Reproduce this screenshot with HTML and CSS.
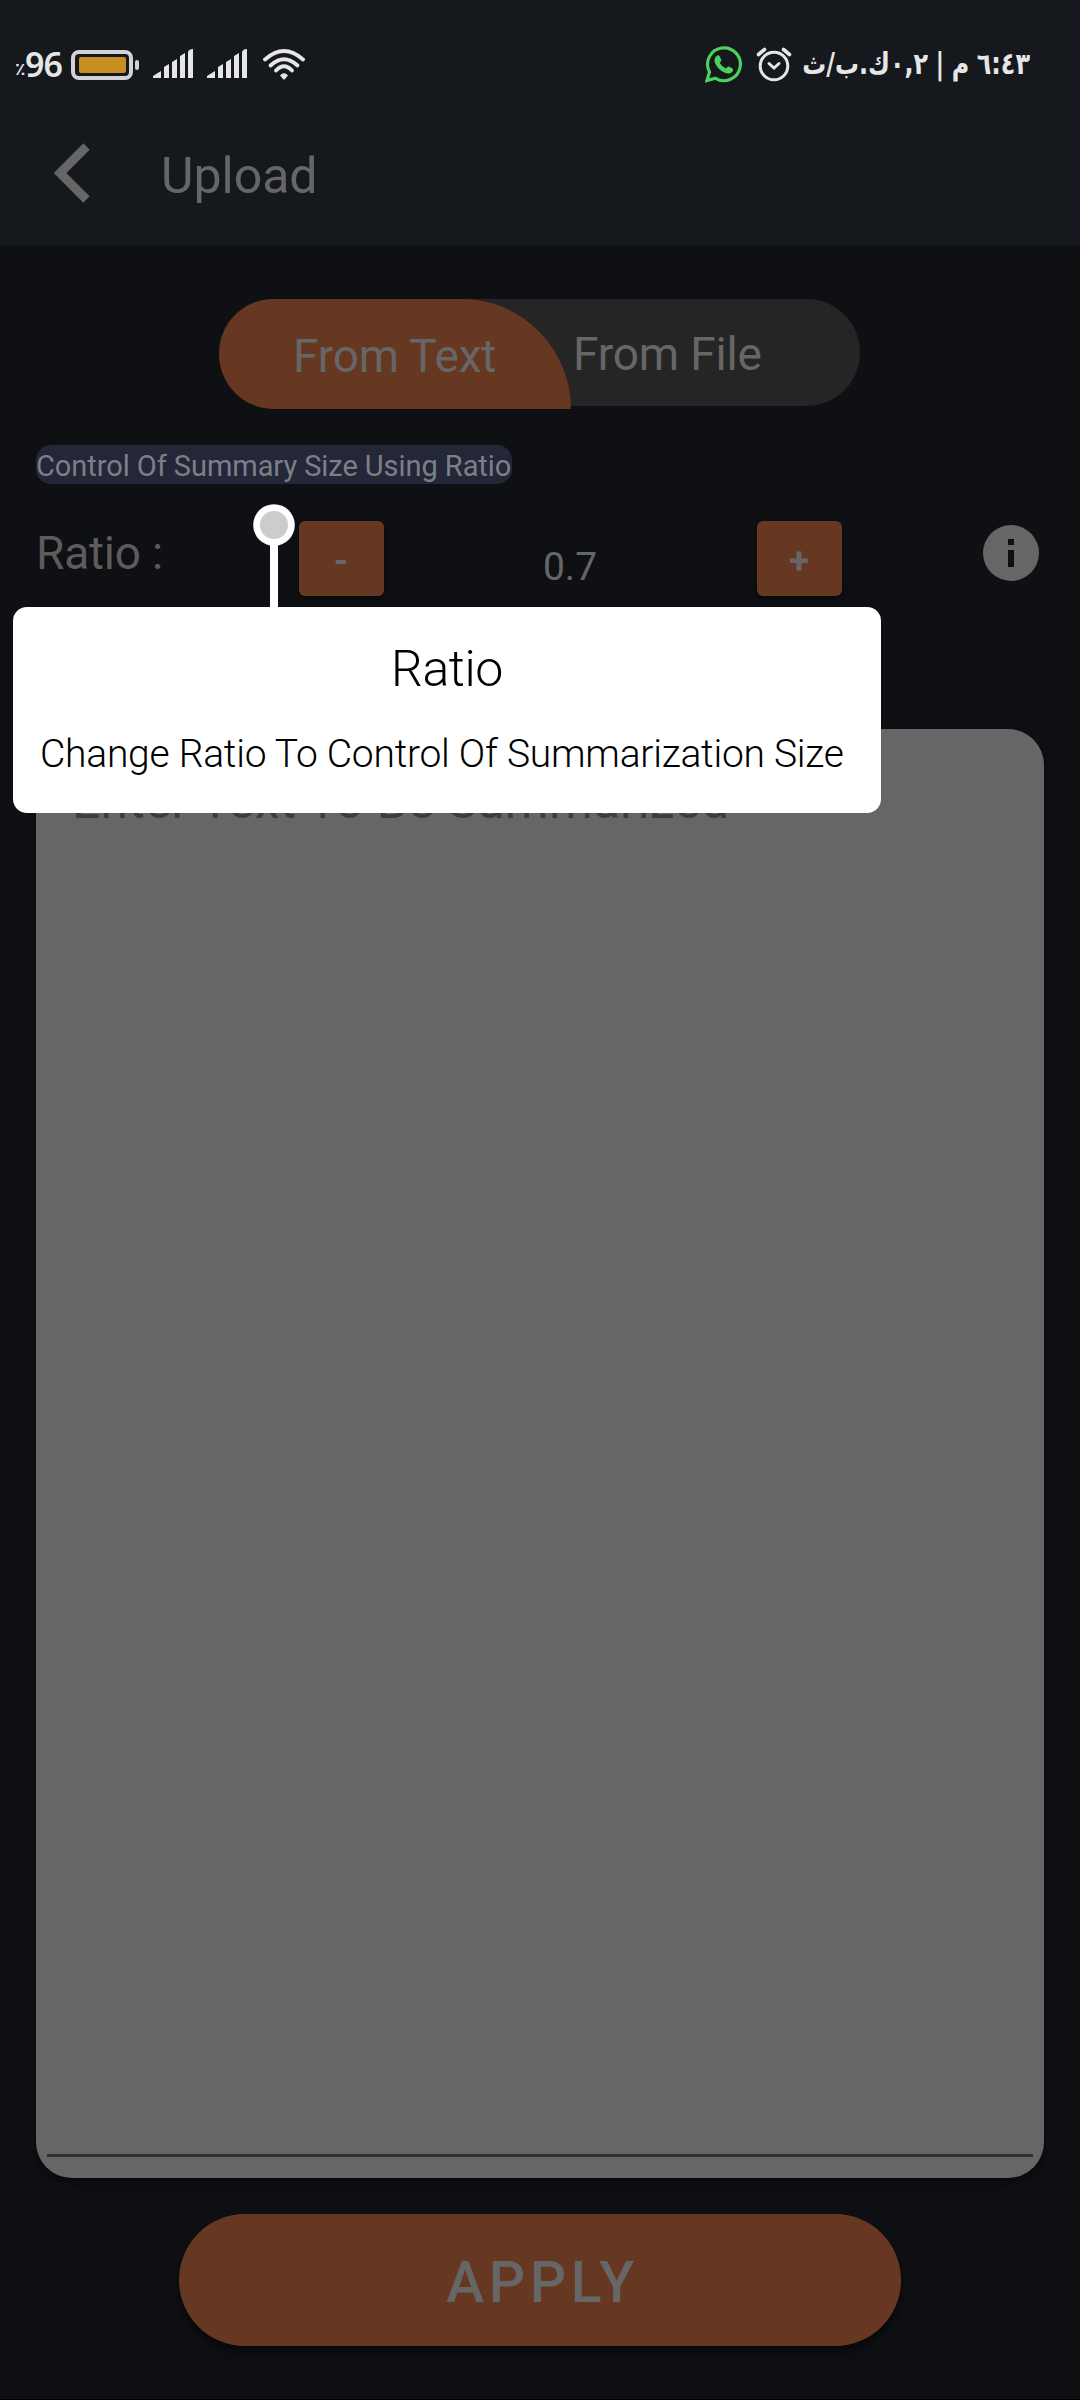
FILE: index.html
```html
<!DOCTYPE html>
<html lang="en">
<head>
<meta charset="utf-8">
<title>Upload</title>
<link rel="stylesheet" href="styles.css">
</head>
<body>
<div class="screen">
  <header class="top">
    <div class="status">
      <div class="status-left">
        <span class="pct">٪</span><span class="level">96</span>
        <svg class="battery" width="70" height="32" viewBox="0 0 70 32"><rect x="2" y="2" width="58" height="26" rx="6" fill="none" stroke="#d2d3d4" stroke-width="4"/><rect x="8" y="7" width="47" height="16" rx="2" fill="#c98e22"/><rect x="64" y="10" width="4" height="10" rx="2" fill="#d2d3d4"/></svg>
        <svg class="signal" width="40" height="30" viewBox="0 0 40 30"><path d="M0 29v-2l8-5v7zM11 29V18l5-3v14zM19 29V13l5-3v19zM27 29V7l5-3v25zM35 29V3q1-3 5-3v29z" fill="#e6e6e6"/></svg>
        <svg class="signal second" width="40" height="30" viewBox="0 0 40 30"><path d="M0 29v-2l8-5v7zM11 29V18l5-3v14zM19 29V13l5-3v19zM27 29V7l5-3v25zM35 29V3q1-3 5-3v29z" fill="#e6e6e6"/></svg>
        <svg class="wifi" width="42" height="31" viewBox="0 0 42 31"><g fill="none" stroke="#e6e6e6" stroke-width="3.8" stroke-linecap="round"><path d="M2 10.500Q21-6.500 40 10.500"/><path d="M7.500 16.500Q21 4 34.500 16.500"/><path d="M13 21.500Q21 13 29 21.500"/></g><path d="M17 26.500Q21 22 25 26.500L22 30Q21 31 20 30z" fill="#e6e6e6"/></svg>
      </div>
      <div class="status-right">
        <svg class="whatsapp" width="37" height="37" viewBox="0 0 37 37"><path d="M2 34.500 4.500 26A16.400 16.400 0 1 1 10.500 32.300z" fill="none" stroke="#47d35e" stroke-width="3.200"/><path d="M11.500 10c1-1 2.500-1 3 0l1.700 3.600c.5 1-.2 2-1.400 3.200 1.700 3 3.500 4.600 6.300 5.800 1-1.300 1.900-2.400 2.900-2l3.600 1.800c.9.600.3 2.600-.5 3.500-2 2-4.600 2-7.200.9C15 24.500 12 21.500 10.200 17.500c-1.200-2.800-.8-5.500 1.300-7.500z" fill="#47d35e"/></svg>
        <svg class="alarm" width="36" height="36" viewBox="0 0 36 36"><g fill="none" stroke="#e6e6e6" stroke-linecap="round"><circle cx="18" cy="20" r="13.800" stroke-width="3"/><path d="M13 17.500l5 4.500 5-4.500" stroke-width="3"/><path d="M2.500 8.500 8.500 3.500M33.500 8.500 27.500 3.500" stroke-width="3.600"/></g></svg>
        <span class="clock" dir="rtl" lang="ar">٦:٤٣ م | ٠,٢ك.ب/ث</span>
      </div>
    </div>
    <div class="toolbar">
      <svg class="back" width="36" height="60" viewBox="0 0 36 60"><path d="M32.500 3.500 6 30 32.500 56.500" fill="none" stroke="#666" stroke-width="9"/></svg>
      <h1 class="title">Upload</h1>
    </div>
  </header>

  <main class="content">
    <div class="tabs">
      <div class="tab active">From Text</div>
      <div class="tab">From File</div>
    </div>
    <div class="chip">Control Of Summary Size Using Ratio</div>
    <div class="ratio-row">
      <span class="ratio-label">Ratio :</span>
      <button class="step">-</button>
      <span class="ratio-value">0.7</span>
      <button class="step">+</button>
      <svg class="info" width="56" height="56" viewBox="0 0 56 56"><circle cx="28" cy="28" r="28" fill="#666"/><path d="M25 14h6v6h-6zM25 25h6v17h-6z" fill="#0e1014"/></svg>
    </div>
    <div class="editor"><span class="placeholder">Enter Text To Be Summarized</span><div class="underline"></div></div>
    <button class="apply">APPLY</button>
  </main>

  <div class="tooltip">
    <svg class="pin" width="42" height="104" viewBox="0 0 42 104"><path d="M17 30h8v74h-8z" fill="#fff"/><circle cx="21" cy="21" r="20.800" fill="#fff"/><circle cx="21" cy="21" r="14" fill="#ccc"/></svg>
    <div class="bubble">
      <h2 class="bubble-title">Ratio</h2>
      <p class="bubble-text">Change Ratio To Control Of Summarization Size</p>
    </div>
  </div>
</div>
</body>
</html>
```
FILE: styles.css
```css
* { box-sizing: border-box; }
body { margin: 0; background: #0e1014; font-family: Roboto, sans-serif; color: #666; }
button { border: 0; padding: 0; font-family: inherit; color: inherit; }
svg { display: block; flex: none; }
.screen { position: relative; width: 1080px; height: 2400px; overflow: hidden; border-bottom: 1px solid #000; white-space: nowrap; }

.top { height: 245px; background: #15181c; }
.status { display: flex; justify-content: space-between; height: 128px; padding: 0 50px 0 15px; }
.status-left, .status-right { display: flex; align-items: center; height: 128px; color: #e6e6e6; }
.pct { width: 10px; font: 700 17px/20px "DejaVu Sans", sans-serif; margin-top: 10px; }
.level { width: 46px; font: 600 34px/40px "Noto Sans", sans-serif; letter-spacing: -1px; }
.battery { margin-top: 4px; }
.signal { margin: 0 0 1px 12px; }
.signal.second { margin-left: 14px; }
.wifi { margin-left: 16px; }
.alarm { margin-left: 14px; }
.clock { width: 230px; margin: 0 0 0 8px; font: 700 30px/40px "DejaVu Sans", sans-serif; font-stretch: condensed; letter-spacing: -1px; word-spacing: -1px; transform: scaleX(0.885); transform-origin: right center; }

.toolbar { display: flex; align-items: flex-start; height: 117px; padding: 15px 0 0 54px; }
.title { margin: 3px 0 0 71px; font-weight: 400; font-size: 50px; line-height: 60px; }

.content { display: flex; flex-direction: column; align-items: flex-start; padding: 54px 36px 0; }
.tabs { display: flex; width: 641px; height: 107px; margin-left: 183px; background: #252525; border-radius: 55px; }
.tab { height: 107px; padding-left: 2px; font-size: 46px; line-height: 111px; letter-spacing: -0.15px; }
.tab.active { width: 352px; height: 110px; padding-left: 74px; line-height: 115px; background: #663821; border-radius: 55px 110px 0 55px; }
.chip { width: 476px; height: 39px; margin-top: 39px; border-radius: 15px; background: #242737; color: #7d7f88; font-size: 29px; line-height: 43px; letter-spacing: -0.06px; }
.ratio-row { display: flex; align-items: flex-start; width: 1008px; height: 208px; margin-top: 37px; }
.ratio-label { width: 263px; padding-top: 4px; color: #5c5c5c; font-size: 46px; line-height: 56px; letter-spacing: -0.2px; }
.step { width: 85px; height: 75px; padding: 4px 1px 0 0; border-radius: 6px; background: #663821; box-shadow: 0 3px 6px #0008; font-weight: 700; font-size: 37px; line-height: 71px; }
.ratio-value { width: 373px; padding: 21px 1px 0 0; text-align: center; font-size: 39px; line-height: 50px; }
.info { margin: 4px 0 0 141px; }
.editor { display: flex; flex-direction: column; justify-content: space-between; width: 1008px; height: 1449px; padding: 42px 11px 21px; border-radius: 36px; background: #666; box-shadow: 0 4px 12px #0008; }
.placeholder { padding-left: 25px; color: #3d3d3d; font-size: 50px; line-height: 60px; letter-spacing: 0.18px; }
.underline { height: 3px; background: #303030; }
.apply { align-self: center; width: 722px; height: 132px; margin-top: 36px; padding: 4px 0 0 5px; border-radius: 66px; background: #663821; box-shadow: 0 6px 12px #0008; font-weight: 500; font-size: 57px; letter-spacing: 4.7px; }

.tooltip { position: absolute; left: 13px; top: 504px; width: 868px; }
.pin { margin-left: 240px; }
.bubble { height: 206px; margin-top: -1px; padding-top: 32px; border-radius: 14px; background: #fff; color: #000; text-align: center; }
.bubble-title { margin: 0; font-weight: 300; font-size: 50px; line-height: 60px; letter-spacing: -0.4px; }
.bubble-text { margin: 31px 0 0; padding-left: 27px; text-align: left; font-weight: 300; font-size: 39px; line-height: 48px; letter-spacing: -0.25px; }
```
